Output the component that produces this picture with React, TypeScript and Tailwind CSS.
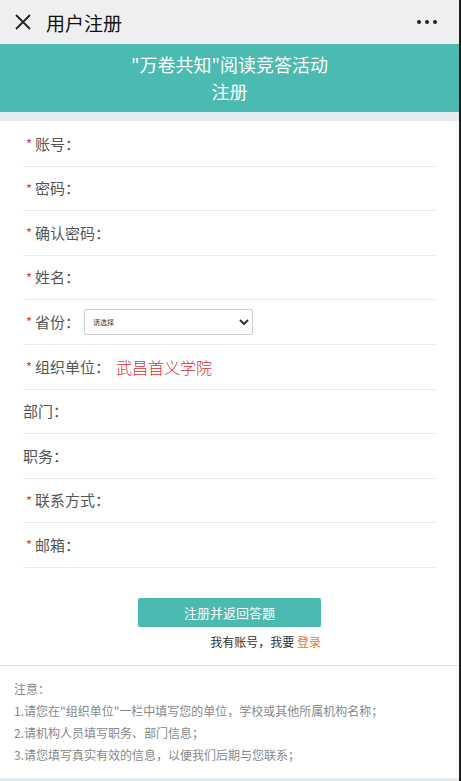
import { useState } from "react";

const fields = [
  { label: "账号", req: true },
  { label: "密码", req: true },
  { label: "确认密码", req: true },
  { label: "姓名", req: true },
  { label: "省份", req: true, select: true },
  { label: "组织单位", req: true, note: "武昌首义学院" },
  { label: "部门", req: false },
  { label: "职务", req: false },
  { label: "联系方式", req: true },
  { label: "邮箱", req: true },
];

export default function App() {
  const [province, setProvince] = useState("");
  return (
    <div
      className="flex w-[461px] h-[781px] overflow-hidden bg-[#1e1e1e]"
      style={{ fontFamily: '"Noto Sans CJK SC", "Noto Sans", sans-serif' }}>
      <div className="flex flex-col w-[459px] bg-white">
        <header className="flex items-center h-[44px] px-[14px] bg-[#efefef] shrink-0">
          <svg width="18" height="18" viewBox="0 0 18 18" className="mr-[14px]">
            <path d="M2 2 L16 16 M16 2 L2 16" stroke="#222" strokeWidth="1.8" />
          </svg>
          <h1 className="text-[19px] text-[#111] leading-none">用户注册</h1>
          <span className="ml-auto flex gap-[4px] mr-[8px]">
            <i className="size-[4px] rounded-full bg-[#222]" />
            <i className="size-[4px] rounded-full bg-[#222]" />
            <i className="size-[4px] rounded-full bg-[#222]" />
          </span>
        </header>
        <section className="flex flex-col items-center justify-center h-[68px] bg-[#4bbab1] text-white text-[18px] leading-[27px] shrink-0">
          <p>"万卷共知"阅读竞答活动</p>
          <p>注册</p>
        </section>
        <div className="h-[9px] bg-[#e5eaee] shrink-0" />
        <form className="flex flex-col px-[23px] pt-[1px]">
          {fields.map((f) => (
            <div
              key={f.label}
              className="flex items-center h-[44.6px] border-b border-[#ececec] text-[15px] text-[#555]">
              <span className="w-[12px] pl-[3px] text-[#e33] text-[13px]">
                {f.req ? "*" : ""}
              </span>
              <span className={f.req ? "" : "-ml-[12px]"}>{f.label}：</span>
              {f.select && (
                <select
                  value={province}
                  onChange={(e) => setProvince(e.target.value)}
                  className="ml-[4px] w-[169px] h-[26px] border border-[#ccc] rounded-[2px] text-[7px] text-[#333] px-[4px] bg-white">
                  <option value="">请选择</option>
                  <option value="hb">湖北</option>
                </select>
              )}
              {f.note && (
                <span className="ml-[6px] text-[16px] font-light text-[#d9302f]">{f.note}</span>
              )}
            </div>
          ))}
        </form>
        <div className="flex flex-col items-center pt-[30px] pb-[14px] border-b border-[#e2e2e2]">
          <button className="w-[183px] h-[29px] bg-[#4bbab1] text-white text-[13px] rounded-[2px]">
            注册并返回答题
          </button>
          <p className="w-[183px] text-right text-[12px] text-[#333] mt-[6px]">
            我有账号，我要 <a className="text-[#e07a3a]">登录</a>
          </p>
        </div>
        <div className="flex flex-col px-[14px] pt-[12px] text-[12px] leading-[22px] text-[#888] grow">
          <p>注意：</p>
          <p>1.请您在"组织单位"一栏中填写您的单位，学校或其他所属机构名称；</p>
          <p>2.请机构人员填写职务、部门信息；</p>
          <p>3.请您填写真实有效的信息，以便我们后期与您联系；</p>
        </div>
        <div className="h-[3px] bg-[#e5eaee] shrink-0" />
      </div>
    </div>
  );
}
